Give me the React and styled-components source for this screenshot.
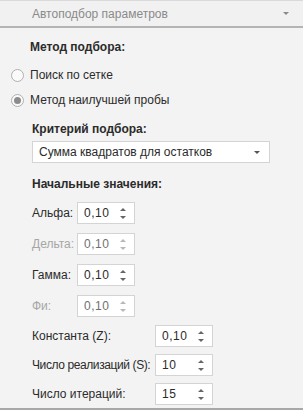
import React from "react";
import styled, { createGlobalStyle } from "styled-components";

const Global = createGlobalStyle`
  html, body {
    margin: 0;
    padding: 0;
    background: #f3f3f3;
  }
  body {
    font-family: "Liberation Sans", Arial, sans-serif;
    font-size: 12px;
    color: #222;
  }
`;

const Panel = styled.div`
  width: 303px;
  height: 410px;
  box-sizing: border-box;
  background: #f3f3f3;
  border-bottom: 2px solid #a8a8a8;
  overflow: hidden;
`;

const Header = styled.div`
  height: 28px;
  box-sizing: border-box;
  border-top: 1px solid #dadada;
  border-bottom: 2px solid #b4b4b4;
  background: #f1f1f1;
  display: flex;
  align-items: center;
  justify-content: space-between;
  padding: 0 14px 0 32px;
  color: #8a8a8a;
`;

const Caret = styled.span`
  width: 0;
  height: 0;
  border-left: 3px solid transparent;
  border-right: 3px solid transparent;
  border-top: 3px solid ${(p) => p.color || "#8a8a8a"};
`;

const Body = styled.div`
  padding-top: 12px;
  display: flex;
  flex-direction: column;
`;

const Title = styled.div`
  font-weight: bold;
  color: #2b2b2b;
  margin-left: ${(p) => p.indent ?? 30}px;
  margin-top: ${(p) => p.top ?? 0}px;
  height: 14px;
  line-height: 14px;
`;

const RadioRow = styled.label`
  display: flex;
  align-items: center;
  gap: 6px;
  margin-left: 11px;
  height: 14px;
  margin-top: ${(p) => p.top}px;
  color: #2b2b2b;
`;

const RadioDot = styled.span`
  width: 11px;
  height: 11px;
  border-radius: 50%;
  border: 1px solid #b0b0b0;
  background: #fafafa;
  display: flex;
  align-items: center;
  justify-content: center;
  &::after {
    content: "";
    width: 7px;
    height: 7px;
    border-radius: 50%;
    background: ${(p) => (p.checked ? "#8c8c8c" : "transparent")};
  }
`;

const Group = styled.div`
  margin-left: 32px;
  display: flex;
  flex-direction: column;
`;

const Select = styled.div`
  margin-top: 5px;
  width: 238px;
  height: 22px;
  box-sizing: border-box;
  border: 1px solid #d4d4d4;
  background: #fff;
  display: flex;
  align-items: center;
  justify-content: space-between;
  padding: 0 9px 0 6px;
  color: #2b2b2b;
`;

const Fields = styled.div`
  display: grid;
  grid-template-columns: ${(p) => p.label}px 58px;
  align-items: center;
  row-gap: ${(p) => p.gap}px;
  margin-top: ${(p) => p.top}px;
`;

const Label = styled.span`
  white-space: nowrap;
  letter-spacing: ${(p) => (p.tight ? "-0.4px" : "0")};
  color: ${(p) => (p.disabled ? "#a6a6a6" : "#2b2b2b")};
`;

const Spin = styled.div`
  height: 22px;
  box-sizing: border-box;
  border: 1px solid #d4d4d4;
  background: #fff;
  display: flex;
  align-items: center;
  justify-content: space-between;
  padding: 0 8px 0 6px;
  letter-spacing: 0.5px;
  color: ${(p) => (p.disabled ? "#6f6f6f" : "#2b2b2b")};
`;

const Arrows = styled.span`
  display: flex;
  flex-direction: column;
  gap: 5px;
`;

const Up = styled.span`
  width: 0;
  height: 0;
  border-left: 3px solid transparent;
  border-right: 3px solid transparent;
  border-bottom: 3px solid ${(p) => (p.disabled ? "#b8b8b8" : "#666")};
`;

const Down = styled(Up)`
  border-bottom: none;
  border-top: 3px solid ${(p) => (p.disabled ? "#b8b8b8" : "#666")};
`;

const SpinBox = ({ value, disabled }) => (
  <Spin disabled={disabled}>
    <span>{value}</span>
    <Arrows>
      <Up disabled={disabled} />
      <Down disabled={disabled} />
    </Arrows>
  </Spin>
);

const initial = [
  { label: "Альфа:", value: "0,10" },
  { label: "Дельта:", value: "0,10", disabled: true },
  { label: "Гамма:", value: "0,10" },
  { label: "Фи:", value: "0,10", disabled: true },
];

const extra = [
  { label: "Константа (Z):", value: "0,10" },
  { label: "Число реализаций (S):", value: "10", tight: true },
  { label: "Число итераций:", value: "15" },
];

export default function App() {
  return (
    <Panel>
      <Global />
      <Header>
        <span>Автоподбор параметров</span>
        <Caret />
      </Header>
      <Body>
        <Title>Метод подбора:</Title>
        <RadioRow top={14}>
          <RadioDot />
          Поиск по сетке
        </RadioRow>
        <RadioRow top={11}>
          <RadioDot checked />
          Метод наилучшей пробы
        </RadioRow>
        <Group>
          <Title indent={0} top={15}>Критерий подбора:</Title>
          <Select>
            <span>Сумма квадратов для остатков</span>
            <Caret color="#555" />
          </Select>
          <Title indent={0} top={14}>Начальные значения:</Title>
          <Fields label={45} gap={9} top={11}>
            {initial.map((f) => (
              <React.Fragment key={f.label}>
                <Label disabled={f.disabled}>{f.label}</Label>
                <SpinBox value={f.value} disabled={f.disabled} />
              </React.Fragment>
            ))}
          </Fields>
          <Fields label={123} gap={7} top={8}>
            {extra.map((f) => (
              <React.Fragment key={f.label}>
                <Label tight={f.tight}>{f.label}</Label>
                <SpinBox value={f.value} />
              </React.Fragment>
            ))}
          </Fields>
        </Group>
      </Body>
    </Panel>
  );
}
